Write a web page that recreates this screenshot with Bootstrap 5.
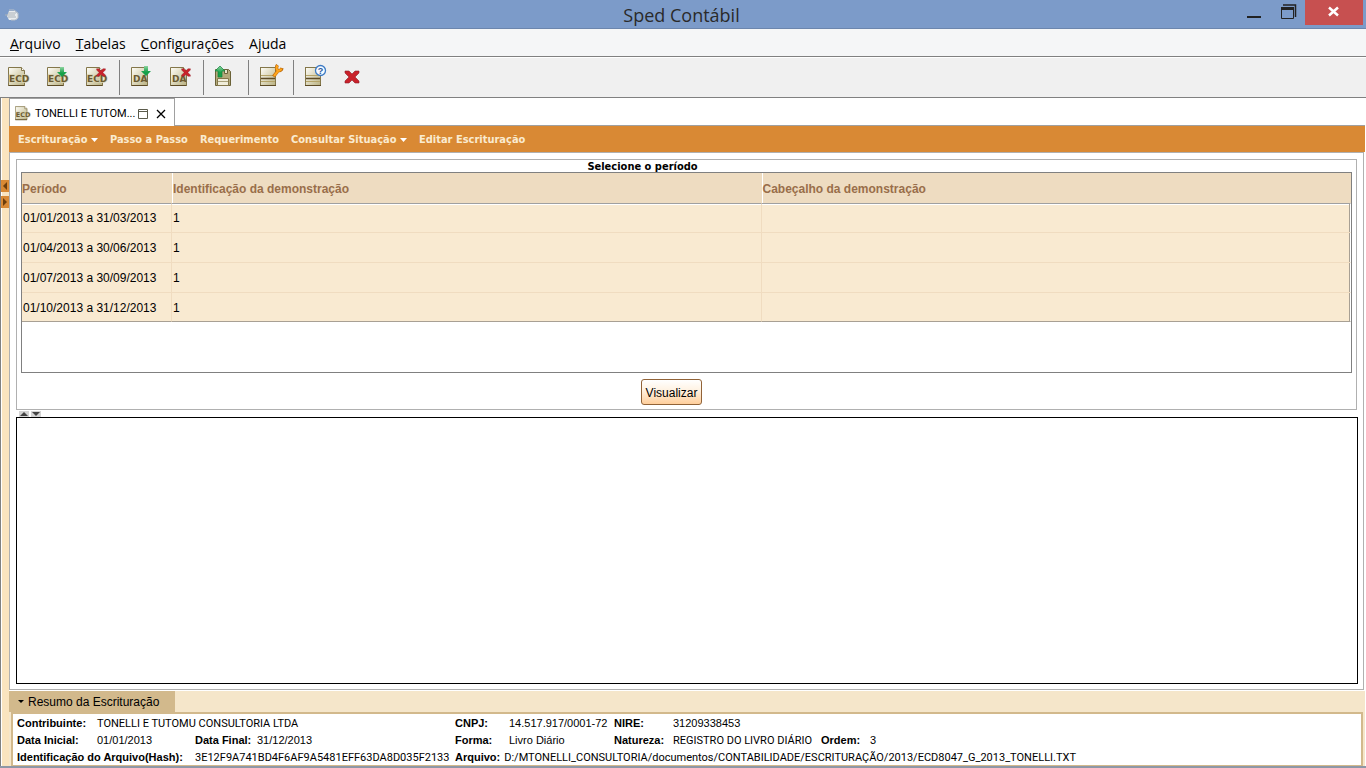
<!DOCTYPE html>
<html lang="pt-BR">
<head>
<meta charset="utf-8">
<meta name="viewport" content="width=device-width, initial-scale=1">
<title>Sped Contábil</title>
<link href="https://cdn.jsdelivr.net/npm/bootstrap@5.3.0/dist/css/bootstrap.min.css" rel="stylesheet">
<style>
  body { font: 12px/16px "Liberation Sans", Arial, sans-serif; color: #000; background: #fff; }
  button { color: inherit; }
  .titlebar { height: 29px; background: #7c9bc9; border-bottom: 1px solid #6c86ad; }
  .titlebar h1 { font: 18px/30px "Open Sans", sans-serif; color: #2a2a2a; }
  .side { flex: 1 1 0; }
  .winbtns { padding-right: 3px; }
  .winbtn { border: 0; padding: 0; background: none; height: 25px; width: 34px; }
  .winbtn.close-win { background: #c75050; width: 58px; }
  .menubar { height: 28px; background: #f5f6f7; border-bottom: 1px solid #808080; padding-left: 10px; gap: 15px; }
  .menubar a { font: 14px/30px "Open Sans", sans-serif; color: #000; text-decoration: none; }
  .toolbar { height: 41px; background: #f0f0f0; border-top: 1px solid #fff; border-bottom: 1px solid #808080; padding-left: 2px; }
  .tool { border: 0; background: none; padding: 0 0 2px 6px; width: 39px; height: 30px; text-align: left; }
  .tool svg { display: block; }
  .divider { width: 1px; height: 35px; background: #808080; margin-right: 5px; }
  .gutter { width: 9px; flex: none; background: #fae4bf; border-left: 1px solid #808080; box-shadow: inset 1px 0 #fff; padding-top: 82px; }
  .gutter button { display: block; width: 8px; height: 12px; padding: 0; border: 0; background: #d98934; margin-bottom: 4px; line-height: 0; }
  .workarea { margin-right: 1px; }
  .tabs { height: 28px; border-bottom: 1px solid #a0a0a0; }
  .doctab { width: 166px; height: 28px; background: #fff; border: 1px solid #a0a0a0; border-bottom: 0; padding: 2px 0 0 5px; font: 11px/16px Roboto, sans-serif; }
  .doctab button { border: 0; background: none; padding: 0; line-height: 0; }
  .actions { height: 26px; background: #d98934; padding-left: 9px; gap: 12px; }
  .actions a { font: bold 11px/28px "DejaVu Sans Condensed", "Open Sans", sans-serif; color: #faebd0; text-decoration: none; }
  .pane { border: 1px solid #b0b0b0; padding: 6px 5px 5px 6px; margin-right: 1px; }
  .period { border: 1px solid #b0b0b0; height: 251px; padding: 0 4px; margin-right: 1px; }
  .period h2 { font: bold 11px/14px "DejaVu Sans Condensed", "Open Sans", sans-serif; height: 12px; margin: 0; padding-right: 88px; }
  .tablebox { border: 1px solid #808080; height: 201px; }
  .periods { width: 100%; table-layout: fixed; border-collapse: separate; border-spacing: 0; }
  .periods th { height: 30px; padding: 2px 0 0; background: #eedcc1; color: #996e4a; border-left: 1px solid #fff; }
  .periods th:first-child { width: 150px; border-left: 0; }
  .periods td { height: 30px; padding: 1px 0 0 1px; background: #f9ead1; border-bottom: 1px solid #f0dcc0; border-right: 1px solid #f0dcc0; }
  .periods tr:first-child td { border-top: 1px solid #a0a0a0; box-shadow: inset 0 1px #fff; padding-top: 0; }
  .periods tr:last-child td { border-bottom-color: #a8a094; height: 29px; padding-top: 2px; }
  .periods td:last-child { border-right: 1px solid #fff; box-shadow: inset -1px 0 #a8a094; }
  .periods tr:first-child td:last-child { box-shadow: inset -1px 0 #a8a094, inset 0 1px #fff; }
  .view { height: 26px; padding: 1px 4px 0; border: 1px solid #916338; border-radius: 3px; background: linear-gradient(#fff, #fff3e4 40%, #ffcf9c); color: #000; }
  .viewrow { padding: 6px 30px 0 0; }
  .splitter { height: 7px; padding-left: 3px; gap: 2px; }
  .splitter button { width: 10px; height: 6px; padding: 0; border: 0; background: #d4d4d4; line-height: 0; }
  .report { border: 1px solid #000; min-height: 60px; }
  .sumhead { height: 21px; background: #f5e6ca; margin-top: 1px; }
  .sumhead button { width: 166px; border: 0; padding: 0 0 0 9px; background: #d2b98c; text-align: left; font-size: 12px; }
  .sumwrap { background: #f5e6ca; padding: 0 2px; }
  .summary { background: #fff; border: solid #d2b98c; border-width: 2px 2px 1px; padding: 1px 0 0 4px; display: grid; grid-template-columns: 80px 98px 62px 198px 54px 105px 59px 148px 49px 1fr; grid-template-rows: 17px 17px 16px; font-size: 11px; line-height: 17px; white-space: nowrap; }
  .caps { font-family: Roboto, sans-serif; }
  .w2 { grid-column: span 2; }
  .w3 { grid-column: span 3; }
  .w6 { grid-column: span 6; }
  .statusline { height: 2px; background: #8e97a6; }
</style>
</head>
<body class="d-flex flex-column min-vh-100">
<svg width="0" height="0" class="position-absolute" aria-hidden="true">
  <defs>
    <linearGradient id="paper" x1="0" y1="0" x2="1" y2="1"><stop offset="0" stop-color="#fffef8"/><stop offset="1" stop-color="#b9b181"/></linearGradient>
    <linearGradient id="leaf" x1="0" y1="0" x2="0" y2="1"><stop offset="0" stop-color="#8fd4a0"/><stop offset=".6" stop-color="#16a049"/></linearGradient>
    <symbol id="sheet" viewBox="0 0 24 26"><path d="M.5 3.500h13l3 3v15H.5z" fill="url(#paper)" stroke="#84774a"/><path d="M13.500 3.500v3h3" fill="#fff" stroke="#84774a"/><path d="M.5 21.500h16" stroke="#5d4b25"/></symbol>
    <symbol id="ecd" viewBox="0 0 24 26"><use href="#sheet" width="24" height="26"/><text x="1" y="18" font-family="DejaVu Sans" font-weight="bold" font-size="9" fill="#6b5a31" stroke="#d9d4b4" stroke-width="1.500" paint-order="stroke">ECD</text></symbol>
    <symbol id="da" viewBox="0 0 24 26"><use href="#sheet" width="24" height="26"/><text x="2" y="18" font-family="DejaVu Sans" font-weight="bold" font-size="9" fill="#6b5a31">DA</text></symbol>
    <symbol id="down" viewBox="0 0 10 10"><path d="M3 0h4v5h3L5 10 0 5h3z" fill="url(#leaf)"/></symbol>
    <symbol id="cross" viewBox="0 0 16 14"><path d="M1 1h4l3 3 3-3h4v2l-4 4 4 4v2h-4l-3-3-3 3H1v-2l4-4-4-4z" fill="#c9222b" stroke="#8e2028" stroke-width=".6"/></symbol>
    <symbol id="form" viewBox="0 0 24 26"><rect x=".5" y="3.500" width="15" height="18" fill="url(#paper)" stroke="#84774a"/><path d="M1 11.500h14M1 17.500h14" stroke="#b5a469"/><path d="M1 14.500h14" stroke="#5d4b25" stroke-width="1.500"/><path d="M0 21.500h16" stroke="#5d4b25"/></symbol>
  </defs>
</svg>

<header class="titlebar d-flex">
  <div class="side">
    <svg width="24" height="28" viewBox="0 0 24 28" class="d-block"><path d="M9 11h6l3 3v4l-2 2H9l-2-4z" fill="#e9ecee"/><path d="M9 10h5l4 3v5l-3 2h-4" fill="none" stroke="#b7bfc8"/><path d="M5 15h10M8 13h8M8 17h8" stroke="#aab1b8"/></svg>
  </div>
  <h1 class="m-0">Sped Contábil</h1>
  <div class="side winbtns d-flex justify-content-end">
    <button class="winbtn" aria-label="Minimizar"><svg width="34" height="25" class="d-block"><path d="M10 17h14" stroke="#222" stroke-width="2"/></svg></button>
    <button class="winbtn" aria-label="Restaurar"><svg width="34" height="25" class="d-block"><path d="M10.500 8.500h12v10h-12z" fill="none" stroke="#222"/><path d="M10 8.500h13" stroke="#222" stroke-width="3"/><path d="M12 5h12.500v12" fill="none" stroke="#222" stroke-width="1.500"/></svg></button>
    <button class="winbtn close-win" aria-label="Fechar"><svg width="58" height="25" class="d-block"><path d="M24 7.500l9 8M33 7.500l-9 8" stroke="#fff" stroke-width="2.500"/></svg></button>
  </div>
</header>

<nav class="menubar d-flex" aria-label="Menu principal">
  <a href="#"><u>A</u>rquivo</a><a href="#"><u>T</u>abelas</a><a href="#"><u>C</u>onfigurações</a><a href="#">A<u>j</u>uda</a>
</nav>

<div class="toolbar d-flex align-items-center" role="toolbar">
  <button class="tool" aria-label="Nova escrituração"><svg width="24" height="26"><use href="#ecd"/></svg></button>
  <button class="tool" aria-label="Importar escrituração"><svg width="24" height="26"><use href="#ecd"/><use href="#down" x="10" y="3" width="10" height="10"/></svg></button>
  <button class="tool" aria-label="Excluir escrituração"><svg width="24" height="26"><use href="#ecd"/><use href="#cross" x="10" y="4" width="10" height="9"/></svg></button>
  <span class="divider"></span>
  <button class="tool" aria-label="Importar DA"><svg width="24" height="26"><use href="#da"/><use href="#down" x="10" y="2" width="10" height="10"/></svg></button>
  <button class="tool" aria-label="Excluir DA"><svg width="24" height="26"><use href="#da"/><use href="#cross" x="11" y="4" width="10" height="9"/></svg></button>
  <span class="divider"></span>
  <button class="tool" aria-label="Salvar cópia"><svg width="24" height="26"><path d="M.5 5.500h13l2 2v14H.5z" fill="#b3aa7b" stroke="#6b6238"/><path d="M9.500 5.500h3v4h-3z" fill="#e8e4cc" stroke="#6b6238"/><path d="M2.500 14.500h11v7h-11z" fill="#f0edda" stroke="#84774a"/><path d="M3 17.500h10" stroke="#aaa17a"/><path d="M5 2l5 5H7v6H3V7H0z" fill="url(#leaf)" stroke="#16843e" stroke-width=".7"/></svg></button>
  <span class="divider"></span>
  <button class="tool" aria-label="Configurar"><svg width="24" height="26"><use href="#form"/><g fill="none" stroke="#b8680c" stroke-width="3.400"><path d="M13.500 12.500l4-5"/><path d="M17.500 1c-1.500 2-1 5 .5 5.500s3.500-.5 4-2.500"/></g><g fill="none" stroke="#ffa51c" stroke-width="2.200"><path d="M14 12l4-5"/><path d="M17.500 1.500c-1.500 2-1 4.500.5 5s3-.5 3.500-2"/></g></svg></button>
  <span class="divider"></span>
  <button class="tool" aria-label="Ajuda"><svg width="24" height="26"><use href="#form"/><circle cx="15.500" cy="6.500" r="5" fill="#f6faff" stroke="#3c7ac4" stroke-width="1.300"/><text x="15.500" y="10" text-anchor="middle" font-family="Liberation Sans" font-weight="bold" font-size="9" fill="#24599e">?</text></svg></button>
  <button class="tool" aria-label="Sair"><svg width="24" height="26"><use href="#cross" x="0" y="6" width="16" height="14"/></svg></button>
</div>

<div class="d-flex flex-grow-1">
  <aside class="gutter">
    <button aria-label="Recolher"><svg width="8" height="12"><path d="M6 2v8L2 6z" fill="#6b3d0c"/></svg></button>
    <button aria-label="Expandir"><svg width="8" height="12"><path d="M2 2v8l4-4z" fill="#6b3d0c"/></svg></button>
  </aside>
  <main class="workarea d-flex flex-column flex-grow-1">
    <div class="tabs">
      <div class="doctab d-flex align-items-center">
        <svg width="16" height="17" viewBox="0 3 22 20" class="me-1 flex-shrink-0"><use href="#ecd" width="24" height="26"/></svg>
        <span class="text-nowrap flex-grow-1">TONELLI E TUTOM...</span>
        <button class="me-2" aria-label="Maximizar aba"><svg width="10" height="10"><path d="M.5.500h9v9h-9zM0 2.500h10" fill="none" stroke="#5b5b4b"/></svg></button>
        <button class="me-2" aria-label="Fechar aba"><svg width="10" height="10"><path d="M1 1l8 8M9 1L1 9" stroke="#000" stroke-width="1.300"/></svg></button>
      </div>
    </div>
    <nav class="actions d-flex" aria-label="Escrituração">
      <a href="#">Escrituração <svg width="7" height="4" class="align-middle"><path d="M0 0h7L3.500 4z" fill="#fff"/></svg></a>
      <a href="#">Passo a Passo</a><a href="#">Requerimento</a>
      <a href="#">Consultar Situação <svg width="7" height="4" class="align-middle"><path d="M0 0h7L3.500 4z" fill="#fff"/></svg></a>
      <a href="#">Editar Escrituração</a>
    </nav>
    <section class="pane d-flex flex-column flex-grow-1">
      <div class="period">
        <h2 class="text-center">Selecione o período</h2>
        <div class="tablebox">
          <table class="periods">
            <thead><tr><th scope="col">Período</th><th scope="col">Identificação da demonstração</th><th scope="col">Cabeçalho da demonstração</th></tr></thead>
            <tbody>
              <tr><td>01/01/2013 a 31/03/2013</td><td>1</td><td></td></tr>
              <tr><td>01/04/2013 a 30/06/2013</td><td>1</td><td></td></tr>
              <tr><td>01/07/2013 a 30/09/2013</td><td>1</td><td></td></tr>
              <tr><td>01/10/2013 a 31/12/2013</td><td>1</td><td></td></tr>
            </tbody>
          </table>
        </div>
        <div class="viewrow text-center"><button class="view">Visualizar</button></div>
      </div>
      <div class="splitter d-flex align-items-end">
        <button aria-label="Subir divisor"><svg width="10" height="6"><path d="M1 5l4-4 4 4z" fill="#444"/></svg></button>
        <button aria-label="Descer divisor"><svg width="10" height="6"><path d="M1 1l4 4 4-4z" fill="#444"/></svg></button>
      </div>
      <div class="report flex-grow-1"></div>
    </section>
    <div class="sumhead d-flex"><button><svg width="6" height="4" class="align-middle me-1"><path d="M0 0h6L3 3z"/></svg>Resumo da Escrituração</button></div>
    <div class="sumwrap">
      <div class="summary">
        <b>Contribuinte:</b><span class="w3 caps">TONELLI E TUTOMU CONSULTORIA LTDA</span>
        <b>CNPJ:</b><span>14.517.917/0001-72</span><b>NIRE:</b><span>31209338453</span><span class="w2"></span>
        <b>Data Inicial:</b><span>01/01/2013</span><b>Data Final:</b><span>31/12/2013</span>
        <b>Forma:</b><span>Livro Diário</span><b>Natureza:</b><span class="caps">REGISTRO DO LIVRO DIÁRIO</span><b>Ordem:</b><span>3</span>
        <b class="w2">Identificação do Arquivo(Hash):</b><span class="w2 caps">3E12F9A741BD4F6AF9A5481EFF63DA8D035F2133</span>
        <span class="w6 d-flex gap-1"><b>Arquivo:</b><span class="caps">D:/MTONELLI_CONSULTORIA/documentos/CONTABILIDADE/ESCRITURAÇÃO/2013/ECD8047_G_2013_TONELLI.TXT</span></span>
      </div>
    </div>
  </main>
</div>
<div class="statusline"></div>
</body>
</html>
